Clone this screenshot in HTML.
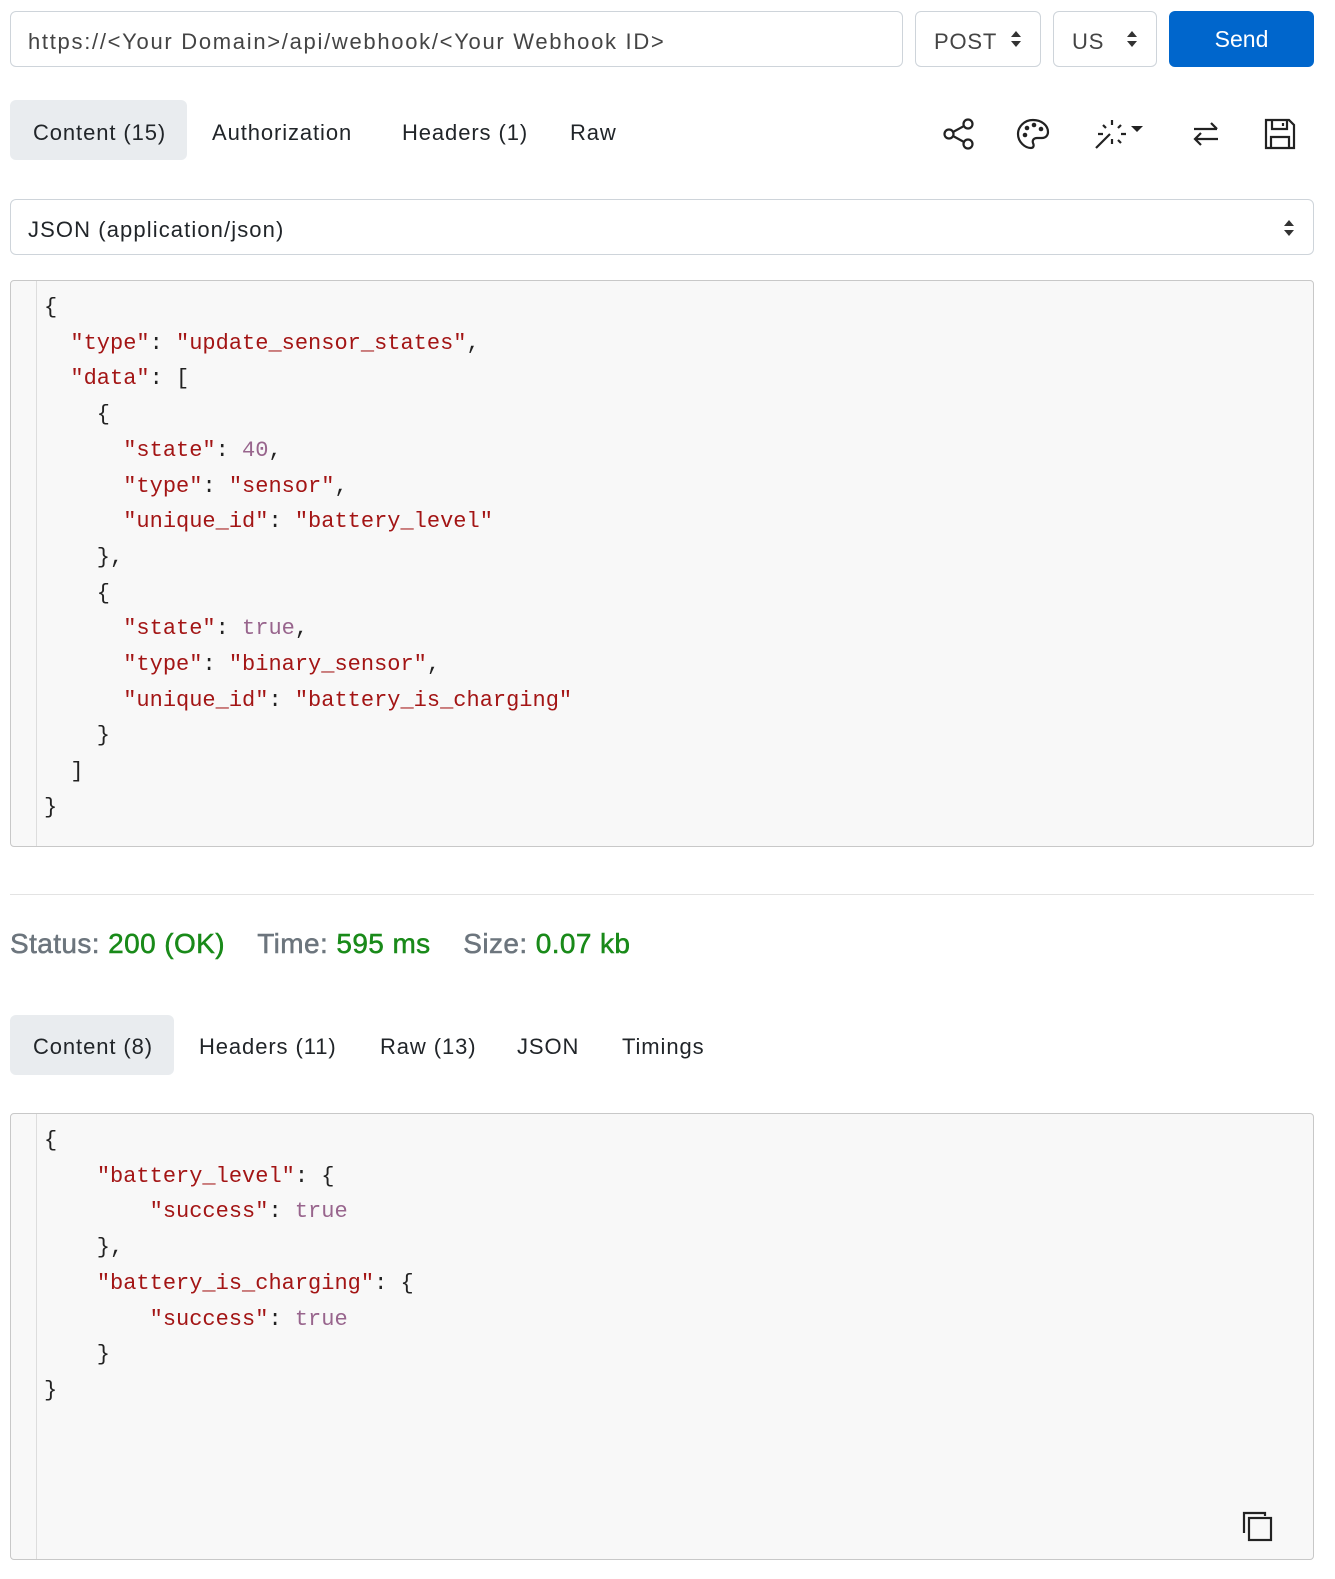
<!DOCTYPE html>
<html><head><meta charset="utf-8"><style>
*{box-sizing:border-box;margin:0;padding:0}
html,body{width:1335px;height:1579px;overflow:hidden}
body{background:#fff;position:relative;font-family:"Liberation Sans",sans-serif;color:#212529}
.a{position:absolute}
.box{position:absolute;border:1px solid #ced4da;border-radius:6px;background:#fff}
.t{position:absolute;font-size:22px;line-height:24px;white-space:nowrap;letter-spacing:0.8px}
.tab{position:absolute;font-size:22px;white-space:nowrap;letter-spacing:0.9px}
.code{position:absolute;background:#f8f8f8;border:1px solid #c8c8c8;border-radius:4px}
.gut{position:absolute;left:25px;top:0;bottom:0;border-left:1px solid #ddd}
pre{position:absolute;left:33px;font-family:"Liberation Mono",monospace;font-size:22px;line-height:35.7px;color:#222}
.s{color:#a31515}.n{color:#98658d}
.lbl{color:#6c757d}.g{color:#198a19}
svg{position:absolute}
</style></head><body>
<div class="box" style="left:10px;top:11px;width:893px;height:56px"></div>
<div class="t" style="left:28px;top:30px;color:#444;letter-spacing:1.7px">https://&lt;Your Domain&gt;/api/webhook/&lt;Your Webhook ID&gt;</div>
<div class="box" style="left:915px;top:11px;width:126px;height:56px"></div>
<div class="t" style="left:934px;top:30px;color:#444">POST</div>
<svg style="left:1009px;top:30px" width="14" height="18" viewBox="0 0 14 18"><path d="M7 1 L12 7 H2Z M7 17 L12 11 H2Z" fill="#333"/></svg>
<div class="box" style="left:1053px;top:11px;width:104px;height:56px"></div>
<div class="t" style="left:1072px;top:30px;color:#444">US</div>
<svg style="left:1125px;top:30px" width="14" height="18" viewBox="0 0 14 18"><path d="M7 1 L12 7 H2Z M7 17 L12 11 H2Z" fill="#333"/></svg>
<div class="a" style="left:1169px;top:11px;width:145px;height:56px;background:#0066cc;border-radius:6px;color:#fff;font-size:23px;text-align:center;line-height:56px">Send</div>

<div class="a" style="left:10px;top:100px;width:177px;height:60px;background:#e9ecef;border-radius:6px"></div>
<div class="tab" style="left:33px;top:120px">Content (15)</div>
<div class="tab" style="left:212px;top:120px">Authorization</div>
<div class="tab" style="left:402px;top:120px">Headers (1)</div>
<div class="tab" style="left:570px;top:120px">Raw</div>

<svg style="left:942px;top:117px" width="34" height="34" viewBox="0 0 34 34" fill="none" stroke="#222" stroke-width="2.2"><circle cx="26" cy="7" r="4.5"/><circle cx="7" cy="17" r="4.5"/><circle cx="26" cy="27" r="4.5"/><path d="M11 15 L22 9 M11 19 L22 25"/></svg>
<svg style="left:1016px;top:117px" width="34" height="34" viewBox="0 0 34 34"><path d="M17 3 C8 3 2 10 2 17 C2 25 9 31 15 31 C18 31 18 28 17 26 C16 23 18 21 21 21 H26 C30 21 32 18 32 15 C32 8 25 3 17 3Z" fill="none" stroke="#222" stroke-width="2.2"/><circle cx="9" cy="18" r="2.3" fill="#222"/><circle cx="11" cy="11" r="2.3" fill="#222"/><circle cx="18" cy="8" r="2.3" fill="#222"/><circle cx="25" cy="12" r="2.3" fill="#222"/></svg>
<svg style="left:1093px;top:117px" width="54" height="34" viewBox="0 0 54 34" stroke="#222" stroke-width="2.2" fill="none"><path d="M3 31 L17 17 M19 3 V8 M19 22 V27 M5 17 H10 M28 17 H33 M10 8 L13 11 M28 8 L25 11 M28 26 L25 23"/><path d="M38 9 H50 L44 15Z" fill="#222" stroke="none"/></svg>
<svg style="left:1190px;top:117px" width="32" height="34" viewBox="0 0 32 34" stroke="#222" stroke-width="2.2" fill="none"><path d="M4 12 H27 M21 6 L27 12 M28 22 H5 M11 16 L5 22 L11 28"/></svg>
<svg style="left:1263px;top:117px" width="34" height="34" viewBox="0 0 34 34" stroke="#222" stroke-width="2.2" fill="none"><path d="M3 3 H26 L31 8 V31 H3Z M9 3 V12 H24 V3 M20 6 V9 M8 31 V20 H26 V31"/></svg>

<div class="box" style="left:10px;top:199px;width:1304px;height:56px"></div>
<div class="t" style="left:28px;top:218px;letter-spacing:1.1px">JSON (application/json)</div>
<svg style="left:1282px;top:219px" width="14" height="18" viewBox="0 0 14 18"><path d="M7 1 L12 7 H2Z M7 17 L12 11 H2Z" fill="#333"/></svg>

<div class="code" style="left:10px;top:280px;width:1304px;height:567px"><div class="gut"></div>
<pre style="top:9px">{
  <span class="s">"type"</span>: <span class="s">"update_sensor_states"</span>,
  <span class="s">"data"</span>: [
    {
      <span class="s">"state"</span>: <span class="n">40</span>,
      <span class="s">"type"</span>: <span class="s">"sensor"</span>,
      <span class="s">"unique_id"</span>: <span class="s">"battery_level"</span>
    },
    {
      <span class="s">"state"</span>: <span class="n">true</span>,
      <span class="s">"type"</span>: <span class="s">"binary_sensor"</span>,
      <span class="s">"unique_id"</span>: <span class="s">"battery_is_charging"</span>
    }
  ]
}</pre></div>

<div class="a" style="left:10px;top:894px;width:1304px;border-top:1px solid #e3e3e3"></div>
<div class="a" style="left:10px;top:928px;font-size:28px;white-space:nowrap;letter-spacing:0.4px;-webkit-text-stroke:0.5px"><span class="lbl">Status:</span> <span class="g">200 (OK)</span>&nbsp;&nbsp;&nbsp; <span class="lbl">Time:</span> <span class="g">595 ms</span>&nbsp;&nbsp;&nbsp; <span class="lbl">Size:</span> <span class="g">0.07 kb</span></div>

<div class="a" style="left:10px;top:1015px;width:164px;height:60px;background:#e9ecef;border-radius:6px"></div>
<div class="tab" style="left:33px;top:1034px">Content (8)</div>
<div class="tab" style="left:199px;top:1034px">Headers (11)</div>
<div class="tab" style="left:380px;top:1034px">Raw (13)</div>
<div class="tab" style="left:517px;top:1034px">JSON</div>
<div class="tab" style="left:622px;top:1034px">Timings</div>

<div class="code" style="left:10px;top:1113px;width:1304px;height:447px"><div class="gut"></div>
<pre style="top:9px">{
    <span class="s">"battery_level"</span>: {
        <span class="s">"success"</span>: <span class="n">true</span>
    },
    <span class="s">"battery_is_charging"</span>: {
        <span class="s">"success"</span>: <span class="n">true</span>
    }
}</pre>
<svg style="left:1230px;top:396px" width="34" height="34" viewBox="0 0 34 34" stroke="#222" stroke-width="2.2" fill="none"><path d="M3 23 V3 H24 V6"/><rect x="8" y="8" width="22" height="22"/></svg>
</div>
</body></html>
